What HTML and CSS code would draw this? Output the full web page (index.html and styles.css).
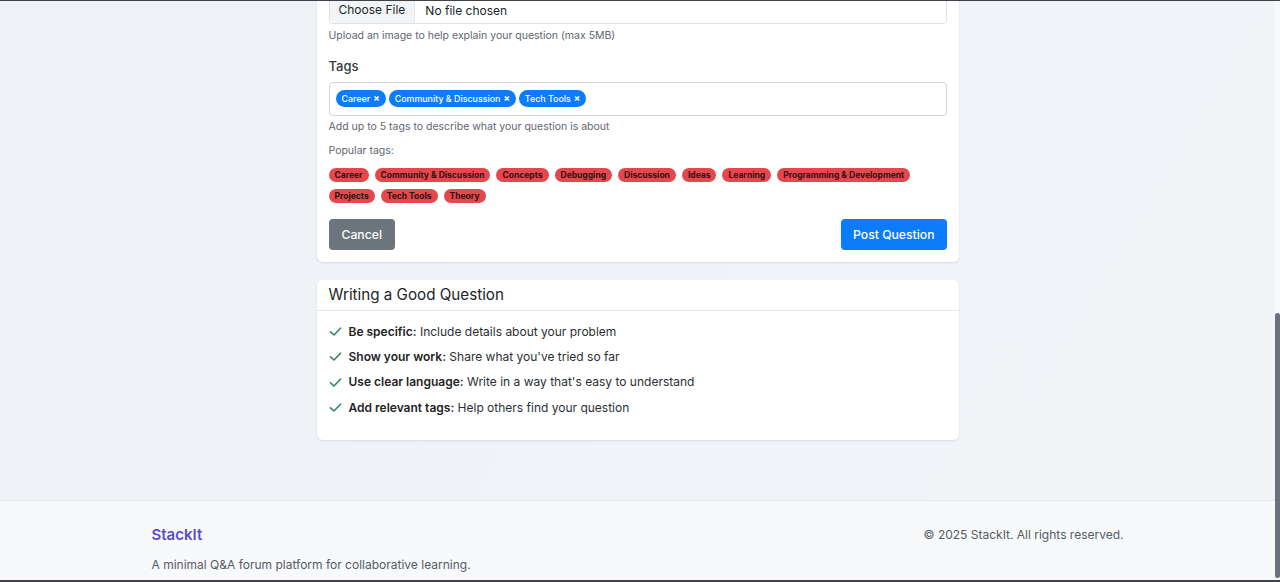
FILE: index.html
```html
<!DOCTYPE html>
<html lang="en">
<head>
<meta charset="utf-8">
<title>Ask a Question - StackIt</title>
<link rel="stylesheet" href="styles.css">
</head>
<body>
<div class="screen">
  <div class="viewport">
    <nav class="navbar">
      <div class="nav-inner">
        <span class="nav-brand">StackIt</span>
      </div>
    </nav>
    <main class="main">
      <section class="card form-card">
        <div class="card-body">
          <h1 class="page-title">Ask a Question</h1>
          <div class="field">
            <label class="label" for="title">Title</label>
            <input class="text-input" id="title" type="text" placeholder="What's your question?">
          </div>
          <div class="field">
            <label class="label" for="desc">Description</label>
            <textarea class="text-area" id="desc" rows="6"></textarea>
          </div>
          <label class="label" for="image">Image (optional)</label>
          <input class="file-input" id="image" type="file">
          <p class="help help-upload">Upload an image to help explain your question (max 5MB)</p>

          <label class="label label-tags">Tags</label>
          <div class="tag-box">
            <span class="chip">Career <b class="chip-x">×</b></span>
            <span class="chip">Community &amp; Discussion <b class="chip-x">×</b></span>
            <span class="chip">Tech Tools <b class="chip-x">×</b></span>
          </div>
          <p class="help help-tags">Add up to 5 tags to describe what your question is about</p>

          <p class="help popular-title">Popular tags:</p>
          <div class="popular">
            <span class="pop">Career</span>
            <span class="pop">Community &amp; Discussion</span>
            <span class="pop">Concepts</span>
            <span class="pop">Debugging</span>
            <span class="pop">Discussion</span>
            <span class="pop">Ideas</span>
            <span class="pop">Learning</span>
            <span class="pop">Programming &amp; Development</span>
            <span class="pop">Projects</span>
            <span class="pop">Tech Tools</span>
            <span class="pop">Theory</span>
          </div>

          <div class="actions">
            <button class="btn btn-cancel" type="button">Cancel</button>
            <button class="btn btn-post" type="button">Post Question</button>
          </div>
        </div>
      </section>

      <section class="card tips-card">
        <h2 class="card-header">Writing a Good Question</h2>
        <ul class="tips">
          <li><svg class="check" viewBox="0 0 13 13" width="13" height="13"><polyline points="1.5,6.8 5,10 11.5,3.2" /></svg><span><strong>Be specific:</strong> Include details about your problem</span></li>
          <li><svg class="check" viewBox="0 0 13 13" width="13" height="13"><polyline points="1.5,6.8 5,10 11.5,3.2" /></svg><span><strong>Show your work:</strong> Share what you've tried so far</span></li>
          <li><svg class="check" viewBox="0 0 13 13" width="13" height="13"><polyline points="1.5,6.8 5,10 11.5,3.2" /></svg><span><strong>Use clear language:</strong> Write in a way that's easy to understand</span></li>
          <li><svg class="check" viewBox="0 0 13 13" width="13" height="13"><polyline points="1.5,6.8 5,10 11.5,3.2" /></svg><span><strong>Add relevant tags:</strong> Help others find your question</span></li>
        </ul>
      </section>
    </main>
    <footer class="footer">
      <div class="footer-inner">
        <div class="footer-left">
          <div class="footer-brand">StackIt</div>
          <p class="footer-desc">A minimal Q&amp;A forum platform for collaborative learning.</p>
        </div>
        <div class="footer-copy">© 2025 StackIt. All rights reserved.</div>
      </div>
    </footer>
  </div>
  <div class="scrollbar"><div class="thumb"></div></div>
</div>
</body>
</html>
```
FILE: styles.css
```css
html, body {
  margin: 0;
  padding: 0;
}

body {
  font-family: Inter, "Noto Sans", "Liberation Sans", sans-serif;
  color: #212529;
  background: #eef2f6;
}

.screen {
  height: 582px;
  box-sizing: border-box;
  border-top: 1px solid #3e434b;
  border-bottom: 2px solid #3e434b;
  display: grid;
  grid-template-columns: 1fr 5px;
  overflow: hidden;
}

.viewport {
  display: flex;
  flex-direction: column;
  justify-content: flex-end;
  overflow: hidden;
  min-height: 0;
  background: linear-gradient(120deg, #eef1f6 0%, #f0f3f7 60%, #f2f4f8 100%);
}

.viewport > * {
  flex-shrink: 0;
}

/* content above the visible area */
.navbar {
  background: #ffffff;
  border-bottom: 1px solid #e5e7eb;
  height: 56px;
}
.nav-inner {
  max-width: 972px;
  margin: 0 auto;
  height: 56px;
  display: flex;
  align-items: center;
}
.nav-brand {
  color: #5a4bd3;
  font-weight: 600;
  font-size: 18px;
}

.main {
  padding: 24px 0 60px;
}

.card {
  width: 642px;
  margin: 0 auto;
  background: #ffffff;
  border-radius: 6px;
  box-shadow: 0 1px 3px rgba(15, 23, 42, 0.07), 0 1px 2px rgba(15, 23, 42, 0.04);
}

.form-card {
  margin-bottom: 18px;
}

.card-body {
  padding: 12px 12px 12px;
  display: flex;
  flex-direction: column;
}

.page-title {
  font-size: 20px;
  font-weight: 500;
  margin: 4px 0 16px;
}

.field {
  display: flex;
  flex-direction: column;
  margin-bottom: 14px;
}

.label {
  font-size: 13px;
  line-height: 20px;
  font-weight: 500;
  color: #343a40;
  margin-bottom: 6px;
}

.text-input, .text-area {
  font: inherit;
  font-size: 13px;
  border: 1px solid #ced4da;
  border-radius: 4px;
  padding: 6px 10px;
}

.file-input {
  box-sizing: border-box;
  width: 100%;
  height: 28px;
  border: 1px solid #dee2e6;
  border-radius: 4px;
  font-family: Inter, "Noto Sans", sans-serif;
  font-size: 12px;
  color: #212529;
  background: #ffffff;
  padding: 0;
  margin: 0;
}

.file-input::file-selector-button {
  height: 100%;
  margin: 0 10px 0 0;
  padding: 0 9px;
  border: 0;
  border-right: 1px solid #e5e7eb;
  background: #f3f4f6;
  color: #212529;
  font-family: Inter, "Noto Sans", sans-serif;
  font-size: 12px;
}

.help {
  margin: 0;
  font-size: 10.5px;
  line-height: 16px;
  color: #5f6670;
}

.help-upload {
  margin-top: 4px;
  margin-bottom: 12px;
}

.label-tags {
  margin-bottom: 6px;
}

.tag-box {
  box-sizing: border-box;
  height: 34px;
  border: 1px solid #ced4da;
  border-radius: 4px;
  padding: 0 6px;
  display: flex;
  align-items: center;
  gap: 3px;
}

.chip {
  display: inline-flex;
  align-items: center;
  height: 17px;
  padding: 0 6px;
  border-radius: 9px;
  background: #0b7cfb;
  color: #ffffff;
  font-size: 8.9px;
  font-weight: 500;
  white-space: nowrap;
}

.chip-x {
  font-size: 9.5px;
  font-weight: 700;
  margin-left: 3px;
}

.help-tags {
  margin-top: 3px;
  margin-bottom: 8px;
}

.popular-title {
  margin-bottom: 9px;
}

.popular {
  display: flex;
  flex-wrap: wrap;
  gap: 7px 6px;
  width: 600px;
}

.pop {
  height: 14px;
  line-height: 14px;
  padding: 0 6px;
  border-radius: 7px;
  background: #e4474c;
  color: #2a1212;
  font-size: 8.5px;
  font-weight: 700;
  white-space: nowrap;
}

.actions {
  display: flex;
  justify-content: space-between;
  margin-top: 16px;
}

.btn {
  height: 31px;
  border: 0;
  border-radius: 4px;
  padding: 0 13px;
  font-family: Inter, "Noto Sans", sans-serif;
  font-size: 12.2px;
  font-weight: 500;
  color: #ffffff;
}

.btn-cancel {
  background: #6c757d;
}

.btn-post {
  background: #0b7cfb;
  padding: 0 12px;
}

.card-header {
  margin: 0;
  padding: 4px 12px;
  font-size: 15.2px;
  line-height: 22px;
  font-weight: 400;
  color: #212529;
  border-bottom: 1px solid #e6e8eb;
}

.tips {
  list-style: none;
  margin: 0;
  padding: 11px 12px 23px;
  display: flex;
  flex-direction: column;
  gap: 6px;
}

.tips li {
  display: flex;
  align-items: center;
  font-size: 12px;
  line-height: 19.3px;
  color: #2b2f33;
}

.tips strong {
  font-weight: 600;
  color: #1f2326;
}

.check {
  flex: none;
  margin-right: 7px;
}

.check polyline {
  fill: none;
  stroke: #2f8a5c;
  stroke-width: 1.6;
  stroke-linecap: round;
  stroke-linejoin: round;
}

.footer {
  border-top: 1px solid #e3e7ec;
  background: #f8f9fb;
  padding: 22px 0 5px;
}

.footer-inner {
  max-width: 972px;
  margin: 0 auto;
  display: flex;
  justify-content: space-between;
  align-items: flex-start;
}

.footer-brand {
  font-size: 15px;
  line-height: 24px;
  font-weight: 600;
  color: #5a4bd3;
}

.footer-desc {
  margin: 8px 0 0;
  font-size: 12px;
  line-height: 20px;
  color: #555b61;
}

.footer-copy {
  font-size: 12px;
  line-height: 24px;
  color: #555b61;
}

.scrollbar {
  background: #f7f8fa;
  display: flex;
  flex-direction: column;
  justify-content: flex-end;
  padding-bottom: 2px;
}

.thumb {
  height: 265px;
  background: #6b717c;
  border-radius: 3px;
}
```
